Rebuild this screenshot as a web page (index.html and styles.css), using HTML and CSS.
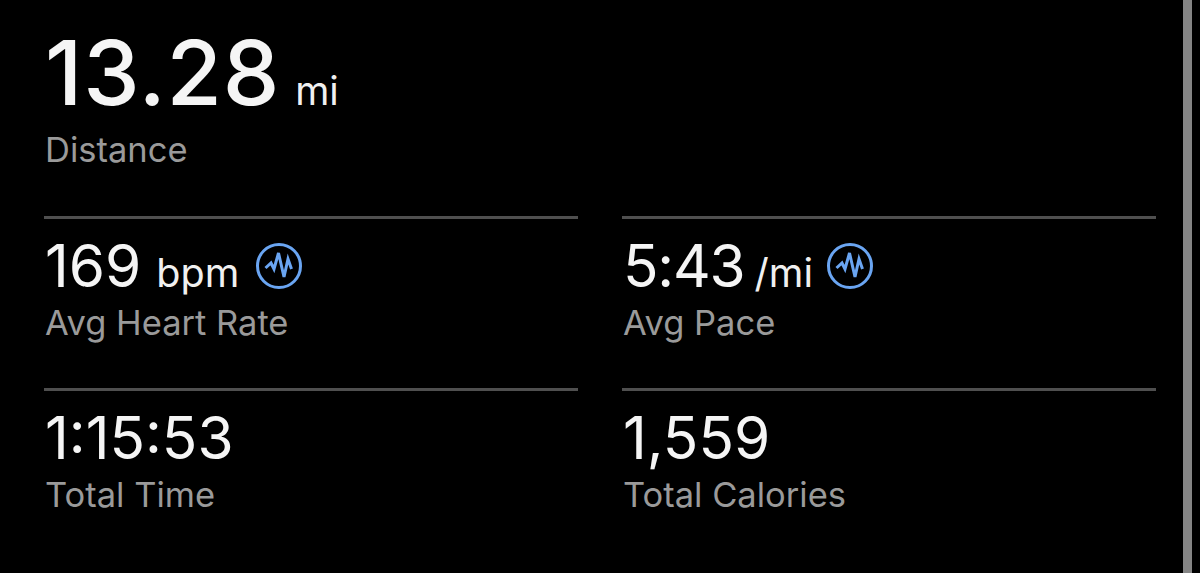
FILE: index.html
```html
<!DOCTYPE html>
<html lang="en">

<head>
  <meta charset="UTF-8">
  <title>Workout Stats</title>
  <link rel="stylesheet" href="styles.css">
</head>

<body>
  <div class="screen">
    <div class="stats">
      <div class="headline">
        <div class="value-row">
          <span class="big-value">13.28</span>
          <span class="big-unit">mi</span>
        </div>
        <div class="big-label">Distance</div>
      </div>

      <div class="grid">
        <div class="cell">
          <div class="value-row">
            <span class="value">169</span>
            <span class="unit">bpm</span>
            <svg class="pulse" viewBox="0 0 46 46">
              <circle cx="23" cy="23" r="21.5" />
              <path d="M9.500 25 L15 20 L18 26 L22.500 10 L28 34 L32 16 L35.500 26" />
            </svg>
          </div>
          <div class="label">Avg Heart Rate</div>
        </div>
        <div class="cell">
          <div class="value-row pace">
            <span class="value">5:43</span>
            <span class="unit">/mi</span>
            <svg class="pulse" viewBox="0 0 46 46">
              <circle cx="23" cy="23" r="21.5" />
              <path d="M9.500 25 L15 20 L18 26 L22.500 10 L28 34 L32 16 L35.500 26" />
            </svg>
          </div>
          <div class="label">Avg Pace</div>
        </div>
        <div class="cell">
          <div class="value-row">
            <span class="value">1:15:53</span>
          </div>
          <div class="label">Total Time</div>
        </div>
        <div class="cell">
          <div class="value-row">
            <span class="value">1,559</span>
          </div>
          <div class="label">Total Calories</div>
        </div>
      </div>
    </div>
    <div class="edge"></div>
  </div>
</body>

</html>
```

FILE: styles.css
```css
html,
body {
  height: 100%;
}

body {
  margin: 0;
  background-color: #000;
  font-family: Inter, "Liberation Sans", sans-serif;
  overflow: hidden;
}

.screen {
  display: flex;
  height: 573px;
}

.stats {
  width: 1112px;
  padding: 21px 0 0 44px;
}

.edge {
  width: 9px;
  margin-left: 27px;
  background-color: #858585;
}

.value-row {
  display: flex;
  align-items: baseline;
}

.headline {
  height: 195px;
  padding-left: 1px;
}

.big-value {
  font-size: 90px;
  line-height: 104px;
  font-weight: 500;
  letter-spacing: 0.8px;
  color: #f5f5f5;
}

.big-unit {
  margin-left: 15px;
  font-size: 39px;
  color: #f0f0f0;
}

.big-label {
  margin-top: 6px;
  font-size: 34.5px;
  line-height: 38px;
  color: #9a9a9a;
}

.grid {
  display: grid;
  grid-template-columns: 534px 534px;
  column-gap: 44px;
}

.cell {
  height: 172px;
  box-sizing: border-box;
  border-top: 3px solid #4f4f4f;
  padding: 16px 0 0 1px;
}

.value {
  font-size: 58.5px;
  line-height: 62px;
  color: #f5f5f5;
}

.unit {
  margin-left: 15px;
  font-size: 39.5px;
  color: #f0f0f0;
}

.pulse {
  align-self: center;
  width: 46px;
  height: 46px;
  margin-left: 17px;
  fill: none;
  stroke: #6aa5f2;
  stroke-width: 3;
}

.pace .value {
  letter-spacing: -1.2px;
}

.pace .unit {
  margin-left: 10px;
}

.pace .pulse {
  margin-left: 14px;
}

.label {
  margin-top: 7px;
  font-size: 34.5px;
  line-height: 38px;
  color: #9a9a9a;
}
```
